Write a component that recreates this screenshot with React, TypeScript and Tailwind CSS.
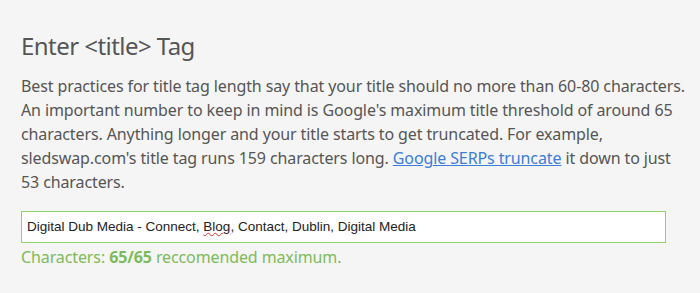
export default function App() {
  return (
    <div className="min-h-[293px] w-[700px] bg-[#f5f5f5] pl-[21px] pt-[30px] font-['Noto_Sans',sans-serif] text-[#555555]">
      <h2 className="text-[24px] leading-[32px] tracking-[-0.55px]">Enter &lt;title&gt; Tag</h2>
      <p className="mt-[12px] whitespace-nowrap text-[16px] leading-[24px] tracking-[-0.11px]">
        Best practices for title tag length say that your title should no more than 60-80 characters.
        <br />
        An important number to keep in mind is Google's maximum title threshold of around 65
        <br />
        characters. Anything longer and your title starts to get truncated. For example,
        <br />
        sledswap.com's title tag runs 159 characters long.{" "}
        <a href="#" className="text-[#3b7dd8] underline">
          Google SERPs truncate
        </a>{" "}
        it down to just
        <br />
        53 characters.
      </p>
      <div className="mt-[17px] flex h-[32px] w-[645px] items-center border border-[#8fd16b] bg-white px-[5px] font-['Liberation_Sans',Arial,sans-serif] text-[13.5px] text-[#222222]">
        <span>
          Digital Dub Media - Connect,{" "}
          <span className="underline decoration-[#e03030] decoration-wavy decoration-1">Blog</span>, Contact, Dublin,
          Digital Media
        </span>
      </div>
      <p className="mt-[2px] text-[16px] leading-[24px] tracking-[-0.11px] text-[#7dbb5a]">
        Characters: <b className="font-bold">65/65</b> reccomended maximum.
      </p>
    </div>
  );
}
